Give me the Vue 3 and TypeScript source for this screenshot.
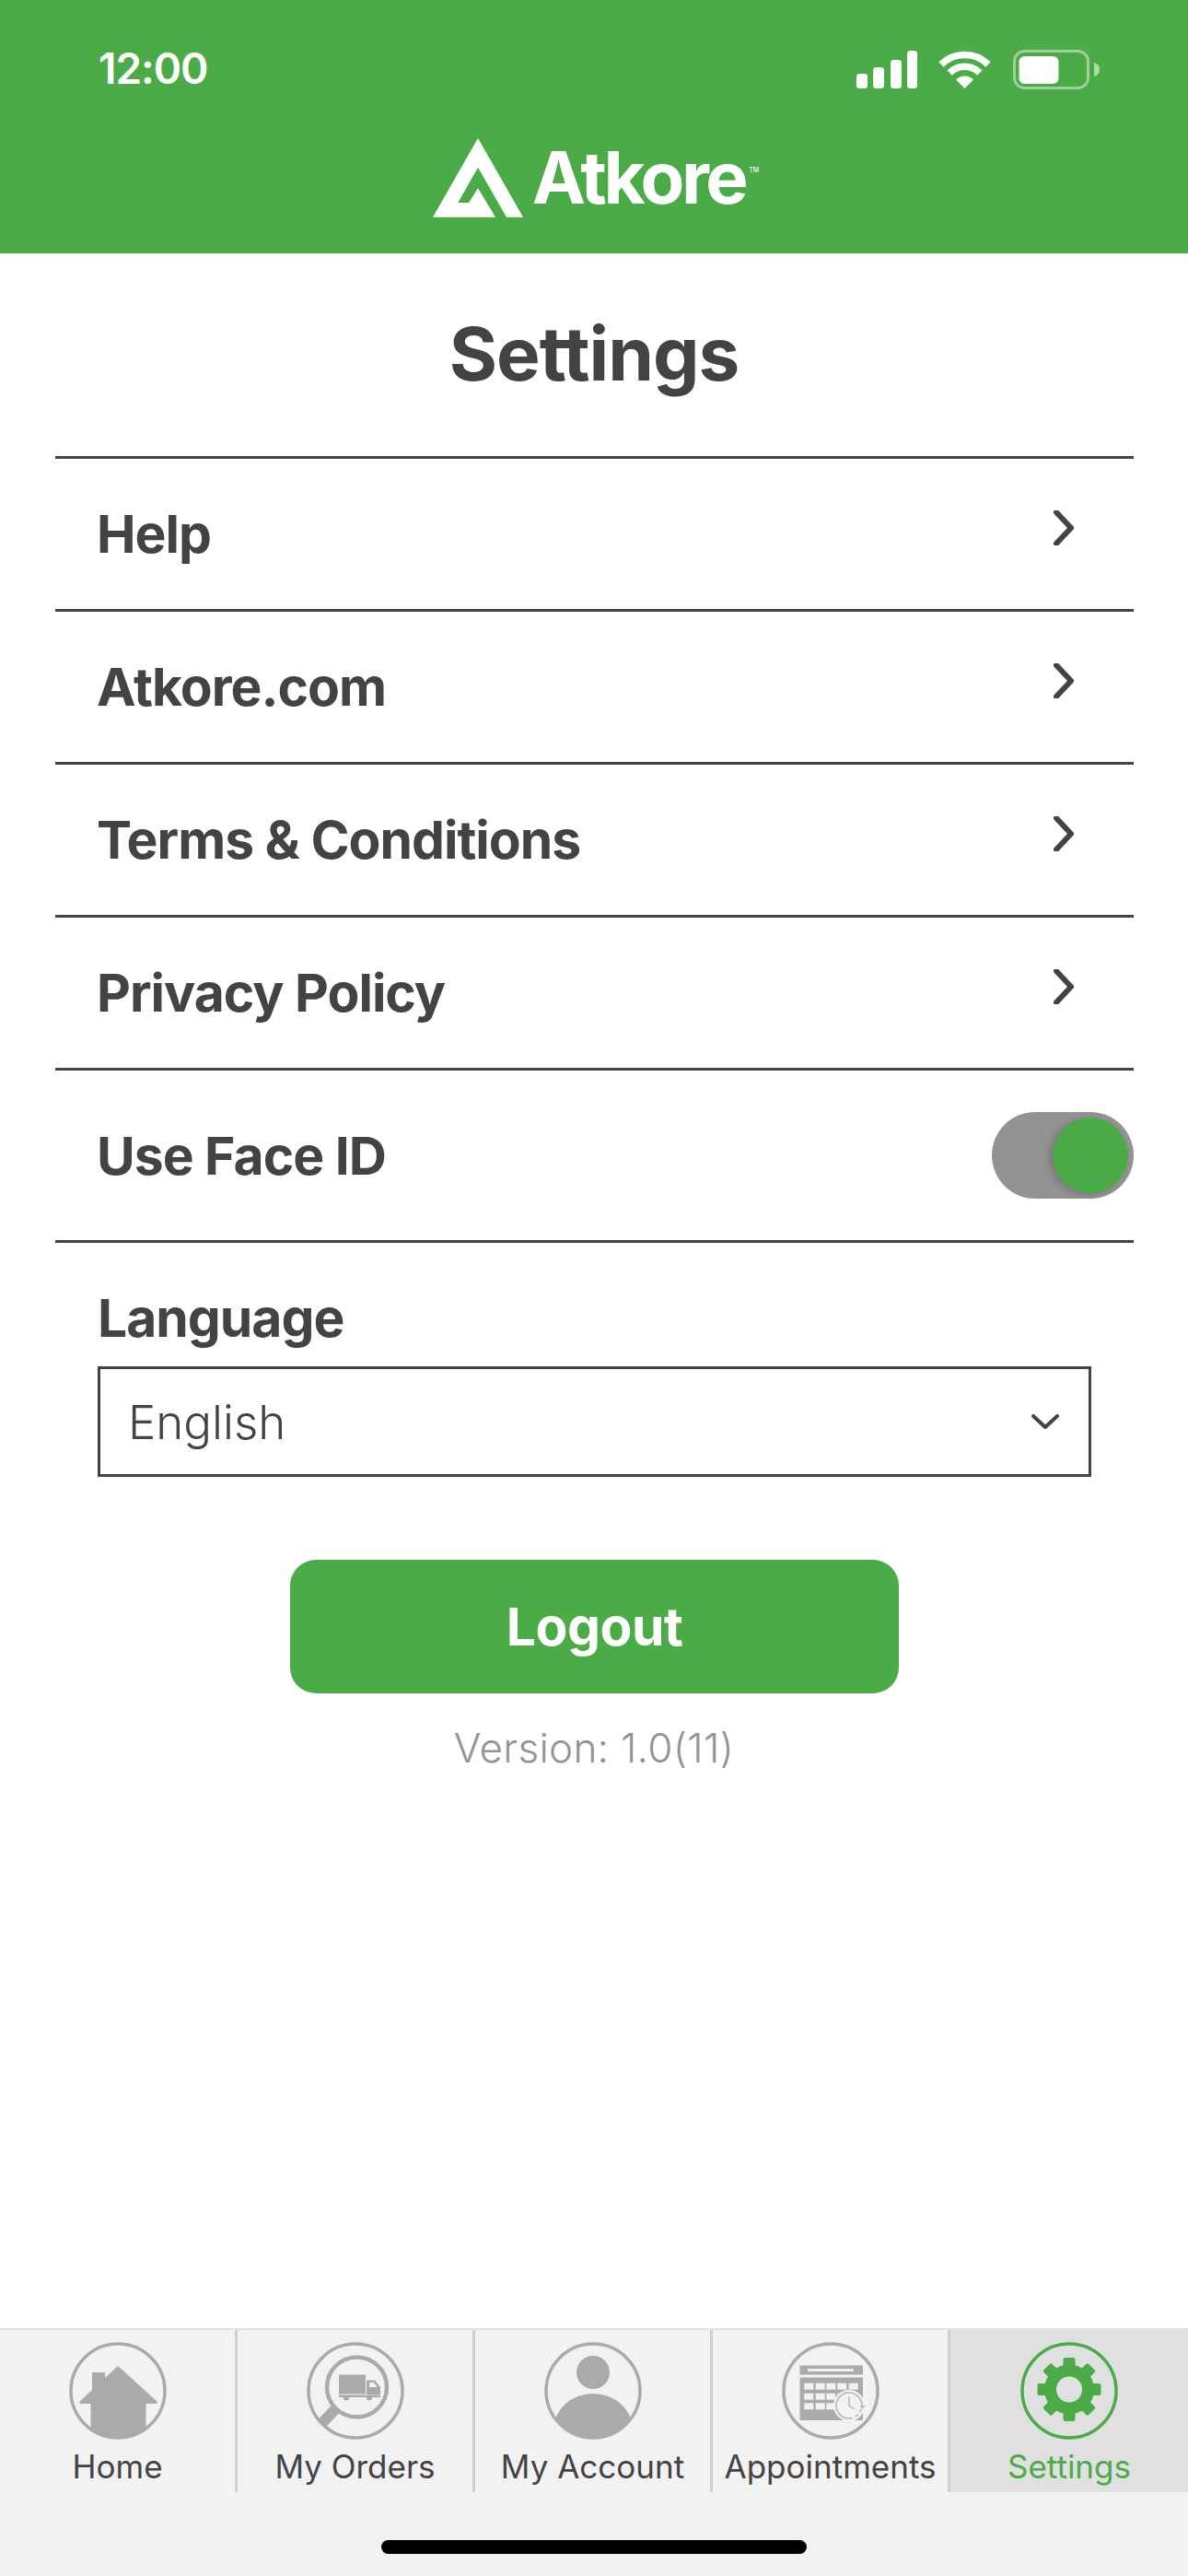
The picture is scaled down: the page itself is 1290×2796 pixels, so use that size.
<script setup lang="ts">
import { ref } from 'vue'

type TabKey = 'home' | 'orders' | 'account' | 'appointments' | 'settings'

const menuItems = ['Help', 'Atkore.com', 'Terms & Conditions', 'Privacy Policy']

const tabs: { key: TabKey, label: string }[] = [
  { key: 'home', label: 'Home' },
  { key: 'orders', label: 'My Orders' },
  { key: 'account', label: 'My Account' },
  { key: 'appointments', label: 'Appointments' },
  { key: 'settings', label: 'Settings' },
]

const activeTab = ref<TabKey>('settings')
const useFaceId = ref(true)

const calendarCols = [33.3, 45.7, 57.3, 69.3, 81.7]
const calendarRows = [51.7, 62.7, 73.3]
const gearAngles = [0, 45, 90, 135, 180, 225, 270, 315]
</script>

<template>
  <div class="screen">
    <header class="app-header">
      <div class="status-bar">
        <span class="time">12:00</span>
        <div class="status-icons">
          <svg class="signal" width="66" height="42" viewBox="0 0 66 42">
            <rect x="0" y="25" width="12" height="16" rx="3.5" />
            <rect x="18" y="18" width="12" height="23" rx="3.5" />
            <rect x="37" y="10" width="12" height="31" rx="3.5" />
            <rect x="55" y="0" width="11" height="41" rx="3.5" />
          </svg>
          <svg class="wifi" width="59" height="42" viewBox="0 0 59 42">
            <path d="M4 15A36 36 0 0 1 55 15" />
            <path d="M13.2 24A23 23 0 0 1 45.8 24" />
            <path class="wifi-dot" d="M29.5 41L20 31.5A13.5 13.5 0 0 1 39 31.5Z" />
          </svg>
          <svg class="battery" width="94" height="43" viewBox="0 0 94 43">
            <rect class="battery-shell" x="1.5" y="1.5" width="80" height="40" rx="11" />
            <rect x="6.5" y="7" width="43" height="30" rx="6" fill="#fff" />
            <path class="battery-nub" d="M88 14C92 15 94 18 94 21.5S92 28 88 29Z" />
          </svg>
        </div>
      </div>
      <div class="logo">
        <svg width="110" height="96" viewBox="0 0 110 96">
          <path fill="#fff" fill-rule="evenodd" d="M55 5L104 90.7H6ZM55 36.7L33.3 75H45L55 59.3L74 90.7H86Z" />
        </svg>
        <span class="logo-name">Atkore<sup>TM</sup></span>
      </div>
    </header>

    <main class="content">
      <h1 class="title">Settings</h1>
      <div class="menu">
        <div v-for="item of menuItems" :key="item" class="menu-row">
          <span>{{ item }}</span>
          <svg class="chevron" width="22" height="38" viewBox="0 0 22 38">
            <path d="M3 2L19 19L3 36" />
          </svg>
        </div>
        <div class="menu-row face-row">
          <span>Use Face ID</span>
          <button class="toggle" type="button" @click="useFaceId = !useFaceId">
            <span class="knob" />
          </button>
        </div>
      </div>

      <section class="language">
        <div class="language-label">Language</div>
        <div class="select">
          <span>English</span>
          <svg width="30" height="16" viewBox="0 0 30 16">
            <path d="M2 2L15 14L28 2" />
          </svg>
        </div>
      </section>

      <button class="logout" type="button">Logout</button>
      <p class="version">Version: 1.0(11)</p>
    </main>

    <footer class="tabbar">
      <nav class="tabs">
        <div
          v-for="tab of tabs"
          :key="tab.key"
          class="tab"
          :class="{ active: tab.key === activeTab }"
          @click="activeTab = tab.key"
        >
          <svg class="tab-icon" width="120" height="120" viewBox="0 0 120 120">
            <defs>
              <clipPath :id="`clip-${tab.key}`">
                <circle cx="60" cy="60" r="51" />
              </clipPath>
            </defs>
            <circle class="ring" cx="60" cy="60" r="51" />

            <g v-if="tab.key === 'home'" :clip-path="`url(#clip-${tab.key})`">
              <path class="solid" d="M60 33L102 71Q104 74 101 74H90.5V120H30.5V74H20Q17 74 19 71L32 59V40H46V46Z" />
            </g>

            <g v-else-if="tab.key === 'orders'" :clip-path="`url(#clip-${tab.key})`">
              <circle class="lens" cx="61.5" cy="56" r="32.5" />
              <path class="handle" d="M38 80L22 97" />
              <rect class="solid" x="42" y="42.5" width="29" height="21" />
              <path class="solid" d="M72 48.500H81L87 56V64H72Z" />
              <path class="cab-window" d="M75 51H80L83.500 56H75Z" />
              <rect class="solid" x="42" y="64.500" width="45" height="2.500" />
              <circle class="solid" cx="50" cy="67.500" r="3" />
              <circle class="solid" cx="75" cy="67.500" r="3" />
            </g>

            <g v-else-if="tab.key === 'account'" :clip-path="`url(#clip-${tab.key})`">
              <ellipse class="solid" cx="60" cy="40" rx="18" ry="18" />
              <ellipse class="solid" cx="60" cy="102" rx="43" ry="39" />
            </g>

            <g v-else-if="tab.key === 'appointments'">
              <rect class="solid" x="26.500" y="32.500" width="68.500" height="10" />
              <rect class="cell" x="35" y="36" width="50" height="3" />
              <rect class="solid" x="26.500" y="45.500" width="68.500" height="46.500" />
              <template v-for="row of calendarRows" :key="row">
                <rect
                  v-for="col of calendarCols"
                  :key="col"
                  class="cell"
                  :x="col - 2"
                  :y="row"
                  width="10"
                  height="7"
                />
              </template>
              <circle class="clock-bg" cx="80" cy="76" r="17" />
              <path class="clock" d="M94 76A14 14 0 1 0 80 90" />
              <path class="clock clock-dash" d="M80 90A14 14 0 0 0 93 80" />
              <path class="clock" d="M80 67V76L86 80" />
              <path class="clock-tip" d="M92 76H98L94 80Z" />
            </g>

            <g v-else class="gear">
              <rect
                v-for="angle of gearAngles"
                :key="angle"
                x="53.500"
                y="24"
                width="13"
                height="14"
                rx="2"
                :transform="`rotate(${angle} 60 58.500)`"
              />
              <circle class="gear-body" cx="60" cy="58.500" r="20.500" />
            </g>
          </svg>
          <span class="tab-label">{{ tab.label }}</span>
        </div>
      </nav>
      <div class="home-indicator" />
    </footer>
  </div>
</template>

<style scoped>
.screen {
  display: flex;
  flex-direction: column;
  width: 1290px;
  height: 2796px;
  overflow: hidden;
  color: #434343;
  font-family: Inter, "Liberation Sans", sans-serif;
  background: #fff;
}

.app-header {
  flex: 0 0 275px;
  box-sizing: border-box;
  padding-top: 54px;
  background: #4bab47;
}

.status-bar {
  display: flex;
  align-items: center;
  justify-content: space-between;
  height: 43px;
  padding: 0 96px 0 107px;
}

.time {
  margin-top: -3px;
  color: #fff;
  font-size: 46px;
  font-weight: 600;
  letter-spacing: -1px;
}

.status-icons {
  display: flex;
  align-items: flex-start;
  gap: 22px;
}

.signal {
  margin-top: 1px;
  fill: #fff;
}

.wifi {
  margin-top: 1px;
  margin-right: 1px;
  fill: none;
  stroke: #fff;
  stroke-width: 7.5;
}

.wifi-dot {
  fill: #fff;
  stroke: none;
}

.battery-shell {
  fill: none;
  stroke: rgb(255 255 255 / 45%);
  stroke-width: 3;
}

.battery-nub {
  fill: rgb(255 255 255 / 55%);
}

.logo {
  display: flex;
  align-items: flex-start;
  justify-content: center;
  gap: 4px;
  margin-top: 48px;
  padding-right: 2px;
}

.logo-name {
  margin-top: 2px;
  color: #fff;
  font-size: 78px;
  font-weight: 700;
  line-height: 92px;
  letter-spacing: -3.5px;
}

.logo-name sup {
  position: relative;
  top: -34px;
  margin-left: 4px;
  font-size: 7px;
  font-weight: 500;
  letter-spacing: 0;
  vertical-align: baseline;
}

.content {
  flex: 1;
  min-height: 0;
}

.title {
  height: 220px;
  margin: 0;
  color: #434343;
  font-size: 80px;
  font-weight: 700;
  line-height: 217px;
  letter-spacing: -1px;
  text-align: center;
}

.menu {
  margin: 0 59px 0 60px;
  border-bottom: 3px solid #434343;
}

.menu-row {
  display: flex;
  align-items: center;
  justify-content: space-between;
  box-sizing: border-box;
  height: 166px;
  border-top: 3px solid #434343;
  padding: 0 65px 0 45px;
  font-size: 57px;
  font-weight: 700;
  letter-spacing: -1px;
}

.face-row {
  height: 187px;
  padding-right: 0;
}

.chevron {
  margin-bottom: 13px;
  fill: none;
  stroke: #434343;
  stroke-width: 6;
  stroke-linecap: round;
  stroke-linejoin: round;
}

.toggle {
  display: flex;
  align-items: center;
  justify-content: flex-end;
  width: 154px;
  height: 94px;
  border: 0;
  border-radius: 47px;
  padding: 0 6px 0 0;
  background: #939393;
}

.knob {
  width: 82px;
  height: 82px;
  border-radius: 50%;
  background: #4bab47;
  box-shadow: -4px 2px 8px rgb(0 0 0 / 18%);
}

.language {
  padding: 0 105px 0 106px;
}

.language-label {
  height: 134px;
  font-size: 57px;
  font-weight: 700;
  line-height: 163px;
  letter-spacing: -1px;
}

.select {
  display: flex;
  align-items: center;
  justify-content: space-between;
  box-sizing: border-box;
  height: 120px;
  border: 3px solid #434343;
  padding: 0 32px 0 30px;
  font-size: 51px;
  font-weight: 350;
}

.select svg {
  fill: none;
  stroke: #434343;
  stroke-width: 4;
  stroke-linecap: round;
  stroke-linejoin: round;
}

.logout {
  display: block;
  width: 661px;
  height: 145px;
  margin: 90px 0 0 315px;
  border: 0;
  border-radius: 28px;
  padding: 0;
  color: #fff;
  font-family: inherit;
  font-size: 57px;
  font-weight: 700;
  letter-spacing: -0.5px;
  background: #4bab47;
}

.version {
  margin: 30px 0 0;
  color: #939393;
  font-size: 44px;
  font-weight: 350;
  line-height: 58px;
  letter-spacing: 0.3px;
  text-align: center;
}

.tabbar {
  flex: 0 0 269px;
  box-sizing: border-box;
  border-top: 2px solid #e0e0e0;
  background: #f2f2f2;
}

.tabs {
  display: grid;
  grid-template-columns: repeat(5, 1fr);
  height: 176px;
}

.tab {
  display: flex;
  flex-direction: column;
  align-items: center;
  box-sizing: border-box;
  padding-top: 6px;
  border-right: 3px solid #cfcfcf;
}

.tab:last-child {
  border-right: 0;
}

.tab.active {
  background: #e0e0e0;
}

.tab-icon {
  flex: none;
}

.ring {
  fill: none;
  stroke: #a9aaac;
  stroke-width: 3.5;
}

.solid {
  fill: #a9aaac;
}

.lens {
  fill: none;
  stroke: #a9aaac;
  stroke-width: 4.500;
}

.handle {
  fill: none;
  stroke: #a9aaac;
  stroke-width: 12;
}

.cab-window,
.cell {
  fill: #f2f2f2;
}

.clock-bg {
  fill: #f2f2f2;
}

.clock {
  fill: none;
  stroke: #b5b6b8;
  stroke-width: 1.5;
}

.clock-dash {
  stroke-dasharray: 4 3;
}

.clock-tip {
  fill: #b5b6b8;
}

.active .ring {
  stroke: #4bab47;
}

.gear rect {
  fill: #4bab47;
}

.gear-body {
  fill: none;
  stroke: #4bab47;
  stroke-width: 13;
}

.tab-label {
  color: #434343;
  font-size: 35px;
  line-height: 44px;
  white-space: nowrap;
}

.active .tab-label {
  color: #4bab47;
}

.home-indicator {
  width: 462px;
  height: 15px;
  margin: 52px auto 0;
  border-radius: 8px;
  background: #000;
}
</style>
